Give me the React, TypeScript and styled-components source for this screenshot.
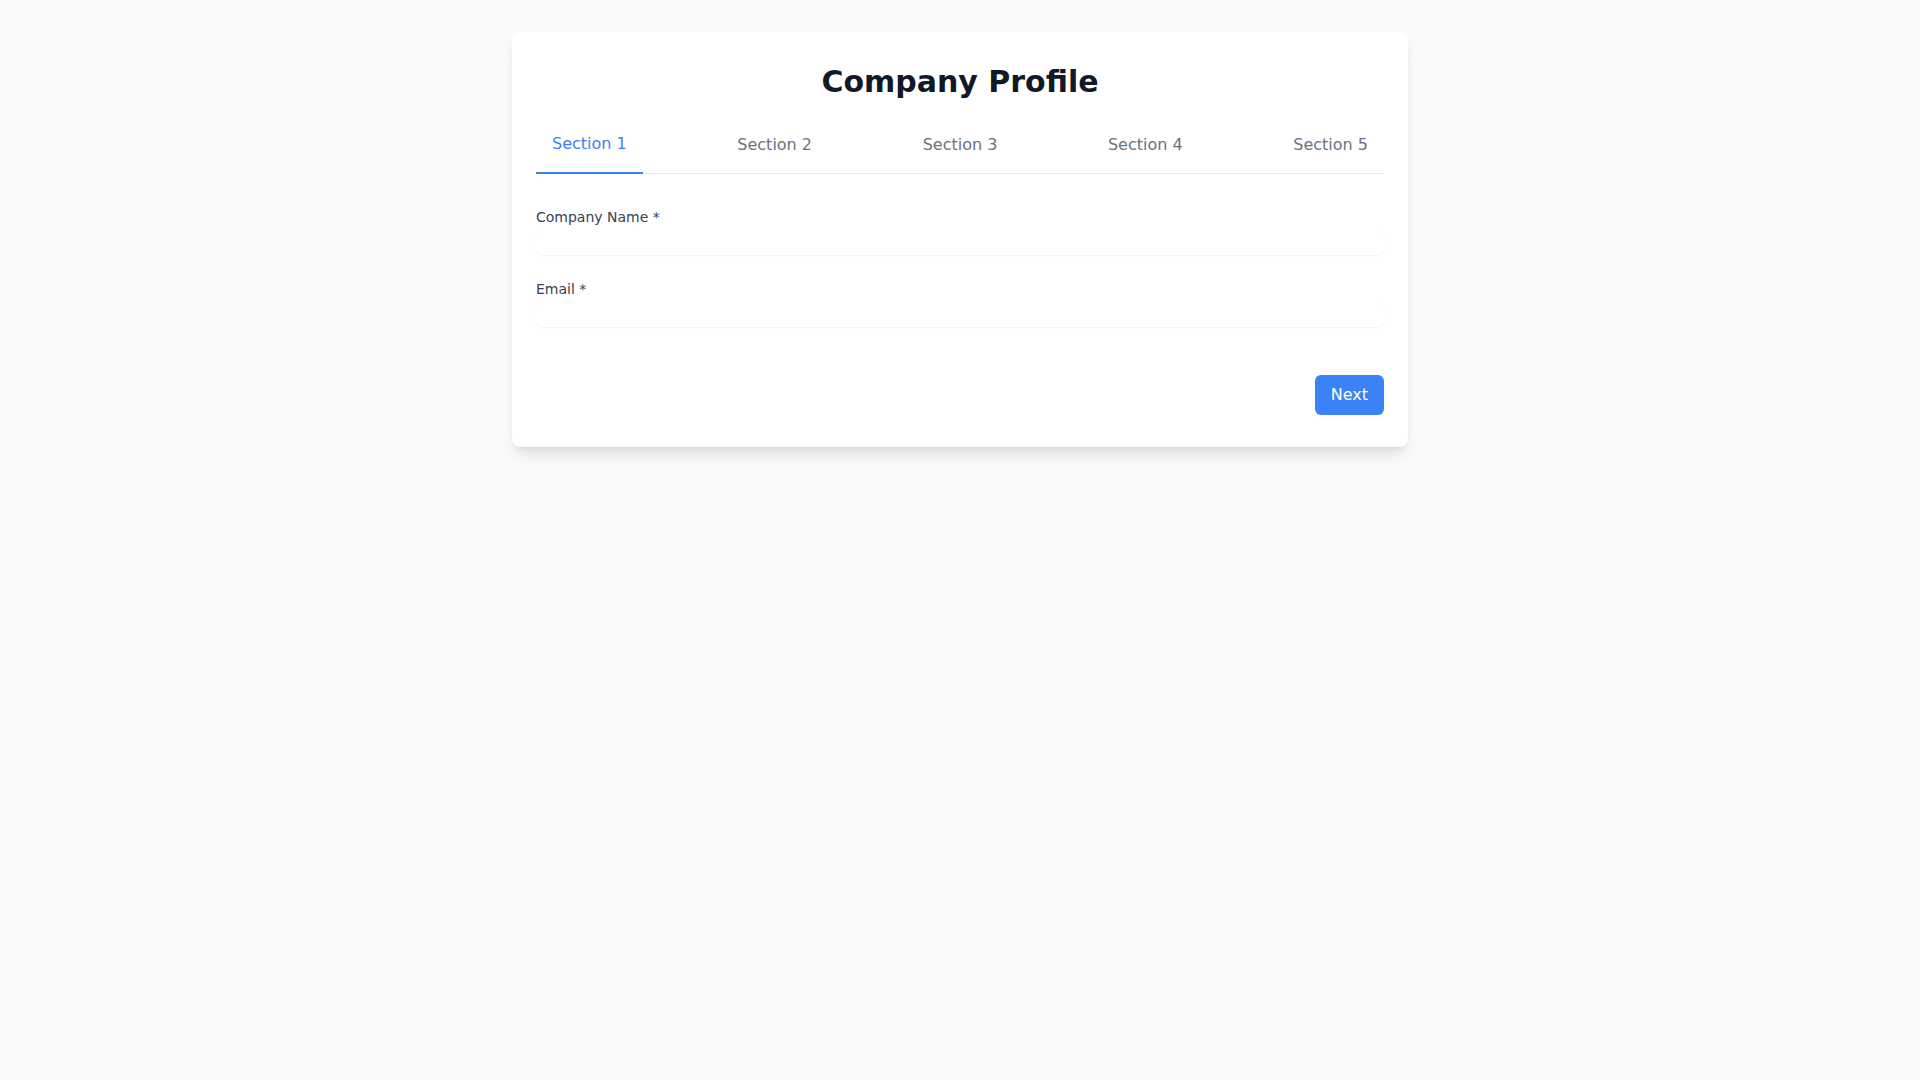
import { useState } from "react";
import styled, { createGlobalStyle } from "styled-components";

const GlobalStyle = createGlobalStyle`
  * {
    box-sizing: border-box;
  }
  body {
    margin: 0;
    background-color: #f9fafb;
    font-family: "DejaVu Sans", sans-serif;
  }
`;

const Page = styled.div`
  min-height: 100vh;
  padding: 32px 0;
`;

const Card = styled.div`
  width: 896px;
  margin: 0 auto;
  background-color: #ffffff;
  border-radius: 8px;
  padding: 32px 24px;
  box-shadow: 0 10px 15px -3px rgba(0, 0, 0, 0.1),
    0 4px 6px -4px rgba(0, 0, 0, 0.1);
`;

const Title = styled.h1`
  margin: 0 0 16px;
  font-size: 30px;
  line-height: 36px;
  font-weight: 700;
  text-align: center;
  color: #111827;
`;

const TabBar = styled.div`
  display: flex;
  justify-content: space-between;
  border-bottom: 1px solid #e5e7eb;
`;

const Tab = styled.button<{ $active: boolean }>`
  padding: ${(p) => (p.$active ? "16px" : "17px 16px 15px")};
  margin-bottom: -1px;
  background: none;
  border: 0;
  border-bottom: 2px solid ${(p) => (p.$active ? "#3b82f6" : "transparent")};
  font-family: inherit;
  font-size: 16px;
  line-height: 24px;
  color: ${(p) => (p.$active ? "#3b82f6" : "#6b7280")};
  cursor: pointer;
`;

const Form = styled.form`
  display: flex;
  flex-direction: column;
  gap: 24px;
  margin-top: 33px;
`;

const Field = styled.div`
  display: flex;
  flex-direction: column;
`;

const Label = styled.label`
  font-size: 14px;
  line-height: 20px;
  color: #374151;
`;

const Input = styled.input`
  margin-top: 4px;
  width: 100%;
  height: 24px;
  padding: 0;
  border: 0;
  border-radius: 6px;
  font-family: inherit;
  font-size: 16px;
  line-height: 24px;
  box-shadow: 0 1px 2px 0 rgba(0, 0, 0, 0.05);
  outline: none;
`;

const Actions = styled.div`
  display: flex;
  justify-content: flex-end;
  margin-top: 24px;
`;

const NextButton = styled.button`
  padding: 8px 16px;
  border: 0;
  border-radius: 6px;
  background-color: #3b82f6;
  color: #ffffff;
  font-family: inherit;
  font-size: 16px;
  line-height: 24px;
  cursor: pointer;
`;

const sections = ["Section 1", "Section 2", "Section 3", "Section 4", "Section 5"];

const App = () => {
  const [active, setActive] = useState(0);
  return (
    <>
      <GlobalStyle />
      <Page>
        <Card>
          <Title>Company Profile</Title>
          <TabBar>
            {sections.map((s, i) => (
              <Tab key={s} $active={i === active} onClick={() => setActive(i)}>
                {s}
              </Tab>
            ))}
          </TabBar>
          <Form onSubmit={(e) => e.preventDefault()}>
            <Field>
              <Label htmlFor="companyName">Company Name *</Label>
              <Input id="companyName" type="text" />
            </Field>
            <Field>
              <Label htmlFor="email">Email *</Label>
              <Input id="email" type="email" />
            </Field>
            <Actions>
              <NextButton type="button">Next</NextButton>
            </Actions>
          </Form>
        </Card>
      </Page>
    </>
  );
};

export default App;
